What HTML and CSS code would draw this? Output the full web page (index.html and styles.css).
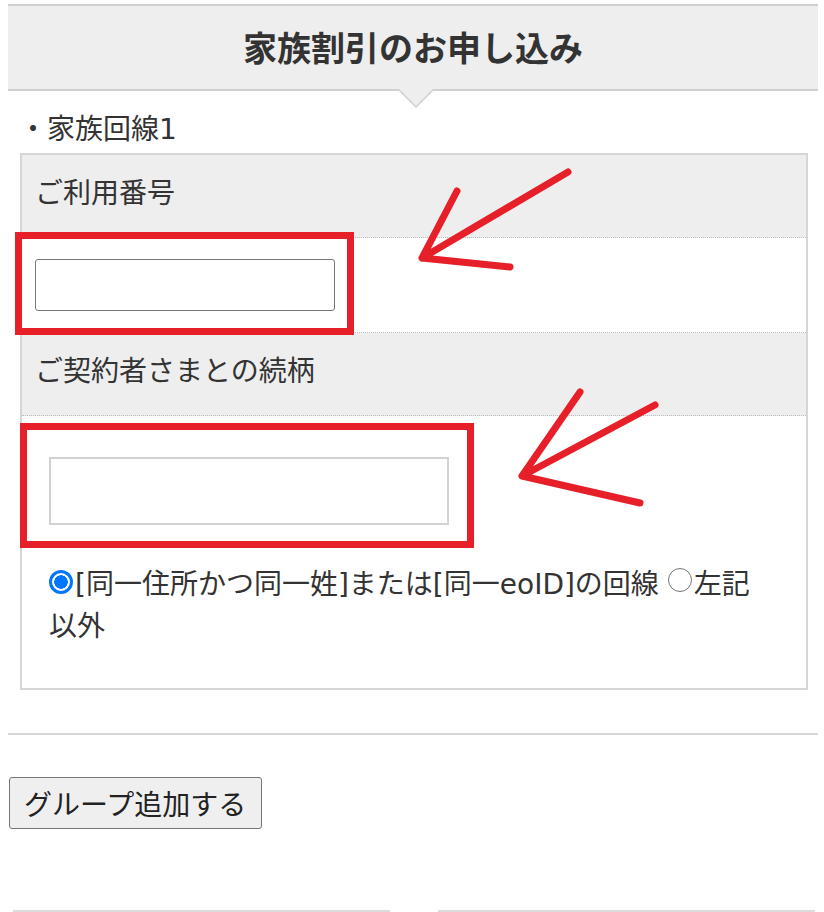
FILE: index.html
```html
<!DOCTYPE html>
<html lang="ja">
<head>
<meta charset="utf-8">
<title>家族割引のお申し込み</title>
<link rel="stylesheet" href="styles.css">
</head>
<body>
<div class="page">
  <div class="hero"><h1 class="title">家族割引のお申し込み</h1></div>
  <div class="spacer"></div>
  <p class="line-label">・家族回線1</p>
  <div class="form-box">
    <div class="row-head">ご利用番号</div>
    <div class="row-body body-1"><input class="input-num" type="text"></div>
    <div class="row-head">ご契約者さまとの続柄</div>
    <div class="row-body body-2">
      <input class="input-rel" type="text">
      <div class="radios"><input type="radio" name="rel" class="radio" checked>[同一住所かつ同一姓]または[同一eoID]の回線 <input type="radio" name="rel" class="radio radio-off">左記以外</div>
    </div>
  </div>
  <hr class="divider">
  <div class="btn-wrap"><button class="add-btn" type="button">グループ追加する</button></div>
  <div class="bottom-row"><div class="bottom-cell"></div><div class="bottom-cell"></div></div>
</div>
<svg class="annot" width="824" height="912" viewBox="0 0 824 912" xmlns="http://www.w3.org/2000/svg">
  <g fill="none" stroke="#e61f29" stroke-width="7" stroke-linecap="round" stroke-linejoin="round">
    <rect x="18.5" y="235.5" width="332" height="96" stroke-linecap="butt" stroke-linejoin="miter"/>
    <rect x="23.5" y="426.5" width="447" height="118" stroke-linecap="butt" stroke-linejoin="miter"/>
    <path d="M568 172 L422 258 M457 191 L422 258 L510 267"/>
    <path d="M580 392 L522 476 M655 405 L522 476 L640 503"/>
  </g>
</svg>
</body>
</html>
```

FILE: styles.css
```css
html, body {
  margin: 0;
  padding: 0;
  overflow: hidden;
  background: #fff;
}
body {
  position: relative;
  width: 824px;
  height: 912px;
  font-family: "DejaVu Sans", "Noto Sans CJK JP", sans-serif;
  font-size: 28px;
  line-height: 42px;
  color: #333;
}
.page {
  padding-top: 4px;
  margin-left: 8px;
  width: 810px;
}
.hero {
  position: relative;
  height: 83px;
  background: #eee;
  border-top: 2px solid #d0d0d0;
  border-bottom: 2px solid #d0d0d0;
  display: flex;
  align-items: center;
  justify-content: center;
}
.hero::before,
.hero::after {
  content: "";
  position: absolute;
  width: 0;
  height: 0;
  border-left: 19px solid transparent;
  border-right: 19px solid transparent;
}
.hero::before {
  left: 389px;
  top: 83px;
  border-top: 19px solid #d0d0d0;
}
.hero::after {
  left: 389px;
  top: 81px;
  border-top: 19px solid #eee;
}
.title {
  margin: 0;
  font-family: "Noto Sans CJK JP", sans-serif;
  font-size: 34px;
  font-weight: 700;
  line-height: 42px;
  color: #333;
  padding-bottom: 2px;
}
.spacer {
  height: 18px;
}
.line-label {
  margin: 0 0 2px 0;
  padding-left: 11px;
}
.form-box {
  margin-left: 12px;
  width: 788px;
  box-sizing: border-box;
  border: 2px solid #d6d6d6;
}
.row-head {
  background: #eee;
  padding: 18px 13px 22px;
  border-bottom: 1px dotted #bdbdbd;
}
.row-body {
  background: #fff;
}
.body-1 {
  padding: 21px 13px;
  border-bottom: 1px dotted #bdbdbd;
}
.input-num {
  display: block;
  box-sizing: border-box;
  width: 300px;
  height: 52px;
  margin: 0;
  border: 1.5px solid #767676;
  border-radius: 3px;
  background: #fff;
  font: inherit;
}
.body-2 {
  padding: 41px 35px 40px 27px;
}
.input-rel {
  display: block;
  box-sizing: border-box;
  width: 400px;
  height: 68px;
  margin: 0 0 39px 0;
  border: 2px solid #d2d2d2;
  border-radius: 0;
  background: #fff;
  font: inherit;
}
.radios {
  line-height: 42px;
}
.radio {
  -webkit-appearance: none;
  appearance: none;
  box-sizing: border-box;
  width: 24px;
  height: 24px;
  margin: 0 2px 0 0;
  vertical-align: baseline;
  border-radius: 50%;
  border: 1.5px solid #767676;
  background: #fff;
}
.radio:checked {
  border: 3px solid #0075ff;
  background: radial-gradient(circle, #0075ff 0 6.5px, #fff 7px 100%);
}
.radio-off {
  margin-bottom: 2px;
}
.divider {
  margin: 43px 0 0 0;
  border: 0;
  height: 2px;
  background: #d6d6d6;
}
.btn-wrap {
  margin-top: 42px;
  margin-left: 1px;
  height: 52px;
}
.add-btn {
  display: block;
  box-sizing: border-box;
  width: 253px;
  height: 52px;
  margin: 0;
  padding: 0 14px;
  font: inherit;
  font-family: "Noto Sans CJK JP", sans-serif;
  color: #222;
  background: #efefef;
  border: 1.5px solid #767676;
  border-radius: 3px;
  text-align: left;
}
.bottom-row {
  margin-top: 81px;
  padding-left: 5px;
  display: flex;
  gap: 48px;
}
.bottom-cell {
  width: 377px;
  height: 0;
  border-top: 2px solid #dcdcdc;
}
.annot {
  position: absolute;
  left: 0;
  top: 0;
  pointer-events: none;
}
```
